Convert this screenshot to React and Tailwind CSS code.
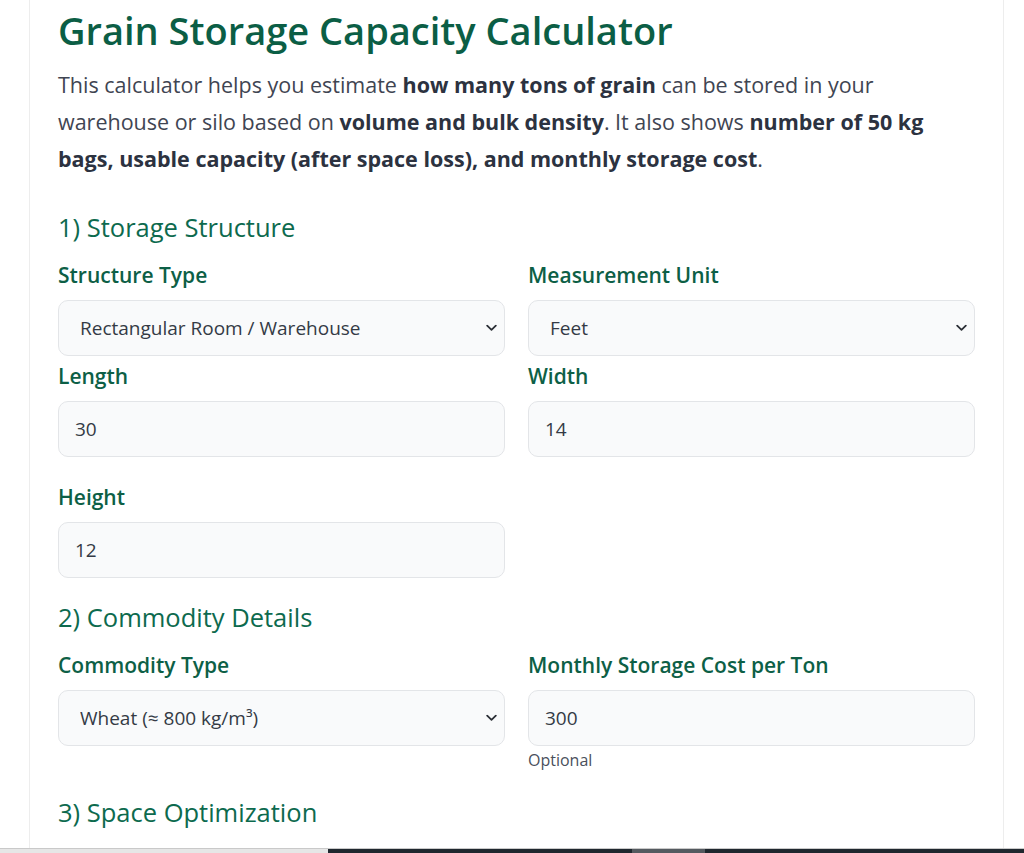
import React, { useState } from "react";

const Chevron = () => (
  <svg
    className="pointer-events-none absolute right-[8px] top-1/2 -translate-y-1/2"
    width="11"
    height="7"
    viewBox="0 0 11 7"
    fill="none"
  >
    <path d="M1.2 1.2L5.5 5.3L9.8 1.2" stroke="#2b2f36" strokeWidth="1.8" strokeLinecap="round" strokeLinejoin="round" />
  </svg>
);

const Label = ({ children }) => (
  <label className="block text-[21px] leading-[28px] font-semibold text-[#0d5f46] mb-[11px]">
    {children}
  </label>
);

const SelectBox = ({ value, onChange, options }) => (
  <div className="relative">
    <select
      value={value}
      onChange={(e) => onChange(e.target.value)}
      className="appearance-none w-full h-[56px] rounded-[10px] border border-[#e3e5e8] bg-[#f9fafb] pl-[21px] pr-10 text-[19px] text-[#343a45] outline-none"
    >
      {options.map((o) => (
        <option key={o} value={o}>
          {o}
        </option>
      ))}
    </select>
    <Chevron />
  </div>
);

const TextBox = ({ value, onChange }) => (
  <input
    type="text"
    value={value}
    onChange={(e) => onChange(e.target.value)}
    className="w-full h-[56px] rounded-[10px] border border-[#e3e5e8] bg-[#f9fafb] px-4 text-[19px] text-[#343a45] outline-none"
  />
);

const SectionTitle = ({ children, className }) => (
  <h2 className={"text-[25.5px] leading-[34px] font-normal text-[#0d6a4e] " + className}>{children}</h2>
);

const App = () => {
  const [structure, setStructure] = useState("Rectangular Room / Warehouse");
  const [unit, setUnit] = useState("Feet");
  const [length, setLength] = useState("30");
  const [width, setWidth] = useState("14");
  const [height, setHeight] = useState("12");
  const [commodity, setCommodity] = useState("Wheat (≈ 800 kg/m³)");
  const [cost, setCost] = useState("300");

  return (
    <div className="h-[853px] flex flex-col bg-white overflow-hidden font-['Open_Sans',sans-serif]">
      <div className="flex-1 ml-[29px] w-[975px] border-x border-[#ededed] px-[28px] pt-[7px]">
        <h1 className="text-[38px] leading-[46px] font-semibold text-[#0b5e45]">
          Grain Storage Capacity Calculator
        </h1>
        <p className="mt-[13px] text-[21.5px] leading-[37px] text-[#3f4552]">
          This calculator helps you estimate <b className="font-bold text-[#2c3240]">how many tons of grain</b> can be
          stored in your warehouse or silo based on <b className="font-bold text-[#2c3240]">volume and bulk density</b>.
          It also shows{" "}
          <b className="font-bold text-[#2c3240]">
            number of 50 kg bags, usable capacity (after space loss), and monthly storage cost
          </b>
          .
        </p>

        <SectionTitle className="mt-[33px] mb-[17px]">1) Storage Structure</SectionTitle>

        <div className="grid grid-cols-2 gap-x-[23px]">
          <div className="mb-[6px]">
            <Label>Structure Type</Label>
            <SelectBox
              value={structure}
              onChange={setStructure}
              options={["Rectangular Room / Warehouse", "Cylindrical Silo"]}
            />
          </div>
          <div className="mb-[6px]">
            <Label>Measurement Unit</Label>
            <SelectBox value={unit} onChange={setUnit} options={["Feet", "Meters"]} />
          </div>
          <div className="mb-[26px]">
            <Label>Length</Label>
            <TextBox value={length} onChange={setLength} />
          </div>
          <div className="mb-[26px]">
            <Label>Width</Label>
            <TextBox value={width} onChange={setWidth} />
          </div>
          <div>
            <Label>Height</Label>
            <TextBox value={height} onChange={setHeight} />
          </div>
        </div>

        <SectionTitle className="mt-[22px] mb-[17px]">2) Commodity Details</SectionTitle>

        <div className="grid grid-cols-2 gap-x-[23px]">
          <div>
            <Label>Commodity Type</Label>
            <SelectBox
              value={commodity}
              onChange={setCommodity}
              options={["Wheat (≈ 800 kg/m³)", "Rice (≈ 580 kg/m³)", "Maize (≈ 720 kg/m³)"]}
            />
          </div>
          <div>
            <Label>Monthly Storage Cost per Ton</Label>
            <TextBox value={cost} onChange={setCost} />
            <div className="mt-[3px] text-[16px] leading-[22px] text-[#4a505c]">Optional</div>
          </div>
        </div>

        <SectionTitle className="mt-[24px]">3) Space Optimization</SectionTitle>
      </div>

      <div className="h-[5px] flex border-t border-[#c9c9c9]">
        <div className="w-[328px] bg-[#e6e6e6]" />
        <div className="w-[304px] bg-[#1f272e]" />
        <div className="w-[73px] bg-[#555a60]" />
        <div className="flex-1 bg-[#1f272e]" />
      </div>
    </div>
  );
};

export default App;
